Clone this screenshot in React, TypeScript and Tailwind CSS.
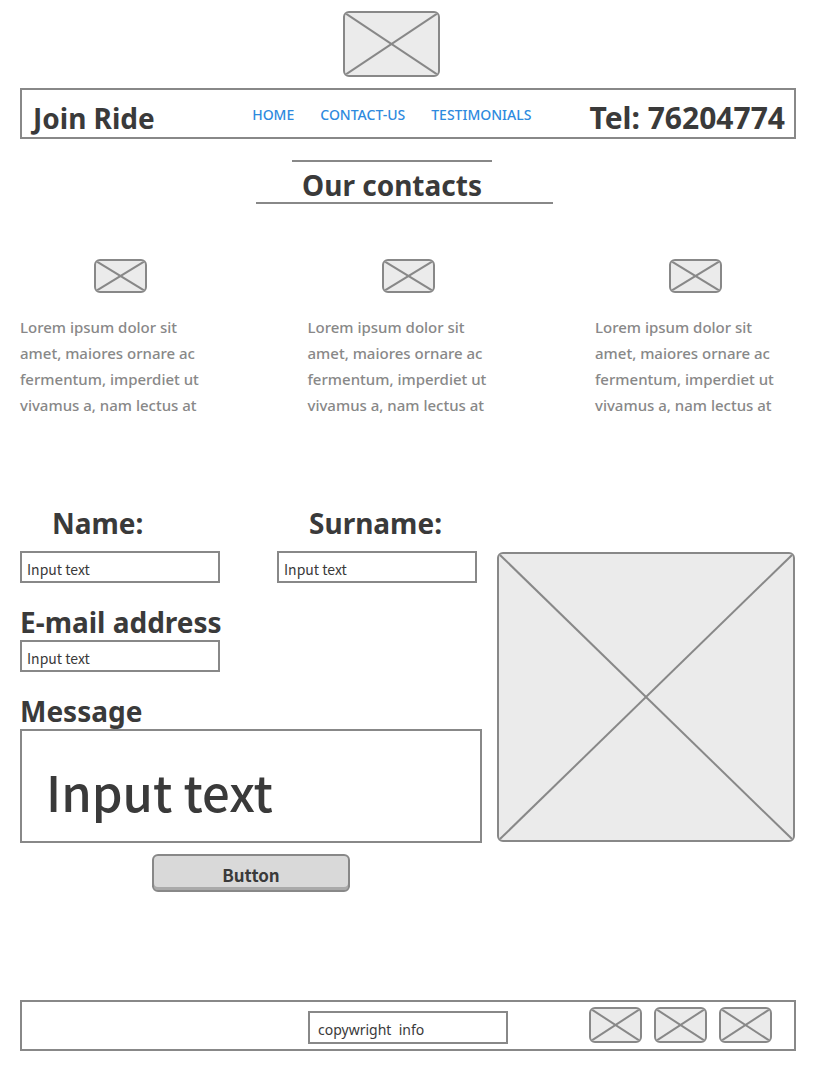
import React from "react";

function Placeholder({ className, label }: { className: string; label: string }) {
  return (
    <div
      role="img"
      aria-label={label}
      className={`shrink-0 overflow-hidden rounded-[6px] border-2 border-[#888888] bg-[#ebebeb] ${className}`}
    >
      <svg className="block size-full" stroke="#888888" strokeWidth="2">
        <line x1="0" y1="0" x2="100%" y2="100%" />
        <line x1="0" y1="100%" x2="100%" y2="0" />
      </svg>
    </div>
  );
}

const fieldClass =
  "block h-8 w-[200px] border-2 border-[#888888] bg-white px-[5px] pt-[3px] font-['Noto_Sans_CJK_SC','Open_Sans',sans-serif] text-[14px] text-[#3a3a3a] placeholder:text-[#3a3a3a] placeholder:opacity-100 outline-none";

const labelClass = "block text-[28px] leading-9 font-bold";

const navItems = ["HOME", "CONTACT-US", "TESTIMONIALS"];
const features = ["First", "Second", "Third"];
const socials = ["Social one", "Social two", "Social three"];

export default function App() {
  return (
    <div className="min-h-screen bg-white px-5 pt-[11px] pb-4 font-['Noto_Sans','Open_Sans',sans-serif] text-[#3a3a3a]">
      <div className="flex justify-center pr-[34px]">
        <Placeholder className="h-[66px] w-[97px]" label="Logo" />
      </div>

      <header className="mt-[11px] flex h-[51px] items-center border-2 border-[#888888] pr-[9px] pl-[11px] whitespace-nowrap">
        <div className="pt-2 text-[28px] leading-9 font-bold">Join Ride</div>
        <nav className="mr-[58px] ml-auto flex gap-[26px] pt-0.5 text-[14px] leading-5 font-medium text-[#2e8ade]">
          {navItems.map((item) => (
            <a key={item} href={`#${item.toLowerCase()}`}>
              {item}
            </a>
          ))}
        </nav>
        <div className="pt-2 text-[30px] leading-9 font-bold">Tel: 76204774</div>
      </header>

      <main>
        <div className="mt-[21px] flex flex-col items-center pr-8">
          <div className="h-0.5 w-[200px] bg-[#888888]" />
          <h1 className="flex h-10 items-center pt-1.5 text-[28px] leading-9 font-bold">Our contacts</h1>
          <div className="ml-6 h-0.5 w-[297px] bg-[#888888]" />
        </div>

        <section className="mt-[55px] flex justify-between">
          {features.map((name) => (
            <article key={name} className="flex w-[201px] flex-col items-center">
              <Placeholder className="h-[34px] w-[53px]" label={name} />
              <p className="mt-[21px] w-full text-[15px] leading-[26px] font-medium whitespace-nowrap text-[#888888]">
                Lorem ipsum dolor sit
                <br />
                amet, maiores ornare ac
                <br />
                fermentum, imperdiet ut
                <br />
                vivamus a, nam lectus at
              </p>
            </article>
          ))}
        </section>

        <section className="mt-[87px] flex items-start gap-[15px] pr-px">
          <form className="w-[462px] shrink-0">
            <div className="flex gap-[57px]">
              <div>
                <label htmlFor="name" className={`${labelClass} pl-8`}>
                  Name:
                </label>
                <input id="name" placeholder="Input text" className={`${fieldClass} mt-[10px]`} />
              </div>
              <div>
                <label htmlFor="surname" className={`${labelClass} pl-8`}>
                  Surname:
                </label>
                <input id="surname" placeholder="Input text" className={`${fieldClass} mt-[10px]`} />
              </div>
            </div>
            <label htmlFor="email" className={`${labelClass} mt-[21px]`}>
              E-mail address
            </label>
            <input id="email" type="email" placeholder="Input text" className={fieldClass} />
            <label htmlFor="message" className={`${labelClass} mt-[21px]`}>
              Message
            </label>
            <textarea
              id="message"
              placeholder="Input text"
              className="block h-[114px] w-full resize-none border-2 border-[#888888] bg-white px-6 pt-7 font-['Noto_Sans_CJK_SC','Open_Sans',sans-serif] text-[49px] leading-[64px] font-medium outline-none placeholder:text-[#3a3a3a] placeholder:opacity-100"
            />
            <button
              type="button"
              className="mx-auto mt-[11px] block h-[38px] w-[198px] rounded-[6px] border-2 border-[#888888] bg-[#d9d9d9] pt-[3px] font-['Noto_Sans_CJK_SC','Open_Sans',sans-serif] text-[17px] leading-6 font-bold shadow-[inset_0_-3px_0_#aaaaaa]"
            >
              Button
            </button>
          </form>
          <Placeholder className="mt-[47px] h-[290px] min-w-0 flex-1" label="Map" />
        </section>
      </main>

      <footer className="mt-[108px] flex h-[51px] items-start justify-end border-2 border-[#888888] pt-[5px] pr-[22px]">
        <input
          aria-label="Copyright"
          defaultValue="copywright  info"
          className="mt-1 mr-[81px] h-[33px] w-[200px] border-2 border-[#888888] px-2 pt-[3px] text-[14px] outline-none"
        />
        <div className="flex gap-3">
          {socials.map((name) => (
            <Placeholder key={name} className="h-9 w-[53px]" label={name} />
          ))}
        </div>
      </footer>
    </div>
  );
}
